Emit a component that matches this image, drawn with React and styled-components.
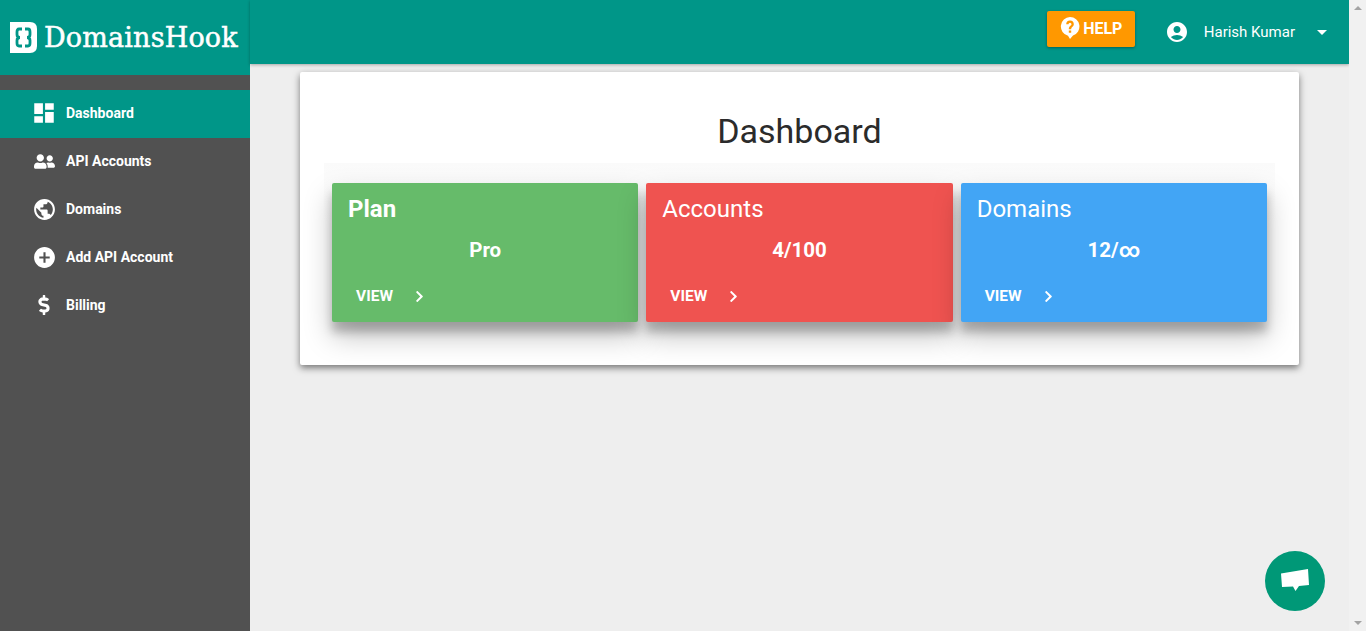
import React from 'react'
import styled, { createGlobalStyle } from 'styled-components'
import { MdDashboard, MdPublic, MdAddCircle, MdAccountCircle, MdArrowDropDown } from 'react-icons/md'
import { FaUserFriends, FaDollarSign, FaChevronRight } from 'react-icons/fa'

const GlobalStyle = createGlobalStyle`
  html, body {
    margin: 0;
    padding: 0;
    height: 100%;
    overflow: hidden;
    background: #eeeeee;
    font-family: Roboto, "Liberation Sans", sans-serif;
  }
  #root { height: 100%; }
`

const Page = styled.div`
  display: flex;
  height: 631px;
  position: relative;
`

const Sidebar = styled.aside`
  width: 250px;
  flex-shrink: 0;
  background: #515151;
  display: flex;
  flex-direction: column;
`

const Brand = styled.div`
  height: 75px;
  background: #009688;
  display: flex;
  align-items: flex-start;
  gap: 7px;
  padding: 22px 0 0 10px;
  box-sizing: border-box;
  margin-bottom: 15px;
`

const BrandName = styled.span`
  font-family: "DejaVu Serif", serif;
  font-size: 27px;
  line-height: 31px;
  color: #fff;
  letter-spacing: 0.17px;
  -webkit-text-stroke: 0.5px #fff;
`

const NavItem = styled.div`
  height: 48px;
  display: flex;
  align-items: center;
  padding: 0 0 2px 32px;
  box-sizing: border-box;
  gap: 10px;
  color: #fff;
  font-size: 14px;
  font-weight: 700;
  letter-spacing: 0;
  background: ${p => (p.$active ? '#009688' : 'transparent')};
`

const NavIcon = styled.span`
  width: 24px;
  height: 24px;
  display: flex;
  align-items: center;
  justify-content: center;
  svg { width: ${p => p.$size}px; height: ${p => p.$size}px; flex-shrink: 0; }
`

const Main = styled.div`
  flex: 1;
  display: flex;
  flex-direction: column;
  min-width: 0;
`

const TopBar = styled.header`
  height: 64px;
  flex-shrink: 0;
  background: #009688;
  box-shadow: 0 1px 3px rgba(0, 0, 0, 0.3);
  display: flex;
  align-items: flex-start;
  justify-content: flex-end;
  color: #fff;
`

const HelpButton = styled.button`
  width: 88px;
  height: 36px;
  margin: 11px 30px 0 0;
  border: 0;
  border-radius: 2px;
  background: #ff9800;
  color: #fff;
  font: 700 16px Roboto, sans-serif;
  display: flex;
  align-items: center;
  justify-content: center;
  gap: 3px;
  padding: 0 0 2px 1px;
  box-shadow: 0 1px 3px rgba(0, 0, 0, 0.35);
`

const User = styled.div`
  display: flex;
  align-items: center;
  font-size: 15px;
  margin: 20px 15px 0 0;
  svg { flex-shrink: 0; }
`

const UserName = styled.span`
  margin: 0 15px;
`

const Content = styled.main`
  padding: 8px 50px 0;
`

const Panel = styled.section`
  height: 293px;
  box-sizing: border-box;
  background: #fff;
  border-radius: 2px;
  padding: 0 24px;
  box-shadow: 0 3px 7px rgba(0, 0, 0, 0.5);
`

const Title = styled.h1`
  margin: 0;
  height: 91px;
  padding-top: 38px;
  box-sizing: border-box;
  text-align: center;
  font-size: 34px;
  line-height: 42px;
  font-weight: 400;
  color: #2b2b2b;
`

const Cards = styled.div`
  display: grid;
  grid-template-columns: repeat(3, 1fr);
  gap: 8px;
  padding: 20px 8px 0;
  background: linear-gradient(#fafafa, #fff 60px);
`

const Card = styled.article`
  height: 139px;
  box-sizing: border-box;
  border-radius: 2px;
  padding: 11px 16px 0;
  color: #fff;
  background: ${p => p.$color};
  box-shadow: 0 14px 28px rgba(0, 0, 0, 0.25), 0 10px 10px rgba(0, 0, 0, 0.22);
`

const CardTitle = styled.div`
  font-size: 24px;
  line-height: 30px;
  font-weight: ${p => (p.$bold ? 700 : 400)};
`

const CardValue = styled.div`
  margin-top: 13px;
  text-align: center;
  font-size: 20.500px;
  line-height: 26px;
  font-weight: 700;
`

const ViewLink = styled.div`
  margin: 21px 0 0 8px;
  display: flex;
  align-items: center;
  font-size: 15.500px;
  font-weight: 700;
  height: 24px;
  svg { margin-left: 20px; }
`

const Scrollbar = styled.div`
  width: 17px;
  flex-shrink: 0;
  background: #f1f1f1;
  display: flex;
  flex-direction: column;
  justify-content: space-between;
  align-items: center;
  padding: 6px 0;
  box-sizing: border-box;
`

const ScrollArrow = styled.span`
  width: 0;
  height: 0;
  border-left: 4px solid transparent;
  border-right: 4px solid transparent;
  border-${p => (p.$down ? 'top' : 'bottom')}: 4px solid #a3a3a3;
`

const ChatBubble = styled.div`
  position: absolute;
  left: 1265px;
  top: 551px;
  width: 60px;
  height: 60px;
  border-radius: 50%;
  background: #009877;
  display: flex;
  align-items: center;
  justify-content: center;
`

const Logo = () => (
  <svg width="27" height="31" viewBox="0 0 27 31">
    <path d="M0 0H20Q27 0 27 7V24Q27 31 20 31H0Z" fill="#fff" />
    <path d="M12 7H9Q7 7 7 10V12.500Q7 15.500 10 15.500Q7 15.500 7 18.500V21Q7 24 9 24H12M15 7H18Q20 7 20 10V12.500Q20 15.500 17 15.500Q20 15.500 20 18.500V21Q20 24 18 24H15" fill="none" stroke="#009688" strokeWidth="2.800" />
  </svg>
)

const HelpIcon = () => (
  <svg width="20" height="22" viewBox="0 0 20 22">
    <path fillRule="evenodd" fill="#fff" d="M10 0a9.500 9.500 0 0 1 3 18.500L10 22l-2-3.300A9.500 9.500 0 0 1 10 0Zm-1.200 13.500v2.300h2.400v-2.300Zm1.200-10a3.800 3.800 0 0 0-3.800 3.800h2.300A1.500 1.500 0 0 1 10 5.800a1.500 1.500 0 0 1 1.500 1.500c0 1.500-2.700 1.500-2.700 5h2.400c0-2.400 2.600-2.600 2.600-5A3.800 3.800 0 0 0 10 3.500Z" />
  </svg>
)

const ChatIcon = () => (
  <svg width="28" height="24" viewBox="0 0 28 24">
    <path fill="#fff" d="M0 4.500 27 0l1 16-10 1-3.500 5-2.500-4.500L1 18Z" />
  </svg>
)

const navItems = [
  { label: 'Dashboard', icon: MdDashboard, size: 26, active: true },
  { label: 'API Accounts', icon: FaUserFriends, size: 21 },
  { label: 'Domains', icon: MdPublic, size: 25 },
  { label: 'Add API Account', icon: MdAddCircle, size: 25 },
  { label: 'Billing', icon: FaDollarSign, size: 20 },
]

const cards = [
  { title: 'Plan', value: 'Pro', color: '#66bb6a', bold: true },
  { title: 'Accounts', value: '4/100', color: '#ef5350' },
  { title: 'Domains', value: '12/∞', color: '#42a5f5' },
]

const App = () => {
  return (
    <Page>
      <GlobalStyle />
      <Sidebar>
        <Brand>
          <Logo />
          <BrandName>DomainsHook</BrandName>
        </Brand>
        {navItems.map(item => (
          <NavItem key={item.label} $active={item.active}>
            <NavIcon $size={item.size}>
              <item.icon />
            </NavIcon>
            {item.label}
          </NavItem>
        ))}
      </Sidebar>
      <Main>
        <TopBar>
          <HelpButton>
            <HelpIcon />
            HELP
          </HelpButton>
          <User>
            <MdAccountCircle size={24} />
            <UserName>Harish Kumar</UserName>
            <MdArrowDropDown size={24} />
          </User>
        </TopBar>
        <Content>
          <Panel>
            <Title>Dashboard</Title>
            <Cards>
              {cards.map(card => (
                <Card key={card.title} $color={card.color}>
                  <CardTitle $bold={card.bold}>{card.title}</CardTitle>
                  <CardValue>{card.value}</CardValue>
                  <ViewLink>
                    VIEW
                    <FaChevronRight size={13} />
                  </ViewLink>
                </Card>
              ))}
            </Cards>
          </Panel>
        </Content>
      </Main>
      <Scrollbar>
        <ScrollArrow />
        <ScrollArrow $down />
      </Scrollbar>
      <ChatBubble>
        <ChatIcon />
      </ChatBubble>
    </Page>
  )
}

export default App
